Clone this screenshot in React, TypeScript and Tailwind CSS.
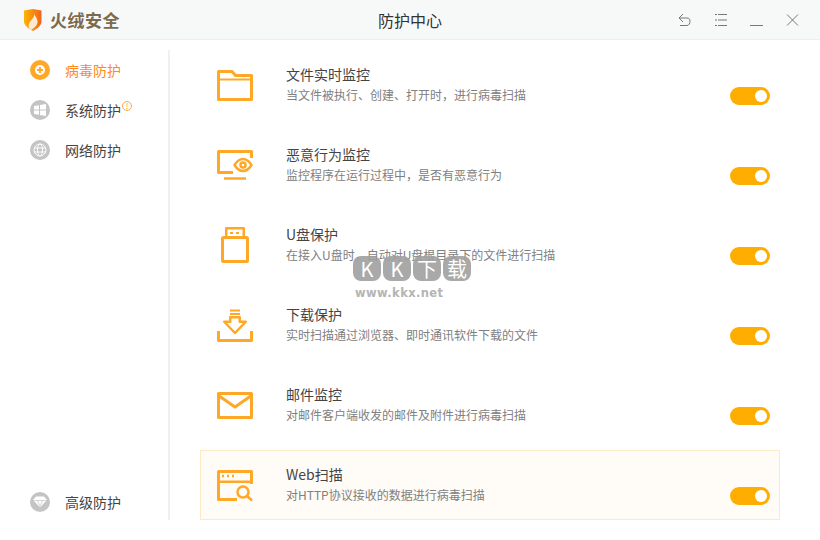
import type { ReactNode } from 'react';

const FONT = "font-['Noto_Sans_CJK_SC','Noto_Sans',sans-serif]";

const ORANGE = '#ffa726';

function Svg({ children }: { children: ReactNode }) {
  return (
    <svg width="38" height="38" viewBox="0 0 38 38" fill="none" stroke={ORANGE} strokeWidth="3" strokeLinejoin="round">
      {children}
    </svg>
  );
}

const FolderIcon = () => (
  <Svg>
    <path d="M1.500 5.500h13.500l3.500 4h16v24h-33z" />
    <path d="M1.500 13.500h33" strokeWidth="2" />
  </Svg>
);

const MonitorIcon = () => (
  <Svg>
    <path d="M16 26.500H1.500v-21h33V12" />
    <path d="M7 32.500h22" strokeWidth="2.500" />
    <path d="M17.500 19c2.500-4 5.500-6 8.500-6s6 2 8.500 6c-2.500 4-5.500 6-8.500 6s-6-2-8.500-6z" strokeWidth="2.500" />
    <circle cx="26" cy="19" r="2.500" strokeWidth="2.500" />
  </Svg>
);

const UsbIcon = () => (
  <Svg>
    <path d="M9.250 11V2.250h17.500V11" strokeWidth="2.500" />
    <rect x="5.500" y="11.500" width="25" height="24" rx="1" />
    <path d="M13 7h3M19 7h3" strokeWidth="2" />
  </Svg>
);

const DownloadIcon = () => (
  <Svg>
    <path d="M13 4.500h10M13 8h10" strokeWidth="2" />
    <path d="M13.250 11.250h9.500v4.500h6L18 27 7.250 15.750h6z" strokeWidth="2.500" />
    <path d="M1.500 25v9.500h33V25" />
  </Svg>
);

const MailIcon = () => (
  <Svg>
    <rect x="1.500" y="7.500" width="33" height="24" />
    <path d="M1.500 9.500L18 21 34.500 9.500" />
  </Svg>
);

const WebIcon = () => (
  <Svg>
    <path d="M20 33.500H1.500v-28h33V18" />
    <path d="M1.500 15.750h33" strokeWidth="2.500" />
    <path d="M5 10h2M10 10h2M15 10h2" strokeWidth="2.500" />
    <circle cx="26" cy="26" r="5.500" strokeWidth="2.500" />
    <path d="M30 30l5 4.500" strokeWidth="2.500" />
  </Svg>
);

const ROWS = [
  { icon: <FolderIcon />, title: '文件实时监控', desc: '当文件被执行、创建、打开时，进行病毒扫描' },
  { icon: <MonitorIcon />, title: '恶意行为监控', desc: '监控程序在运行过程中，是否有恶意行为' },
  { icon: <UsbIcon />, title: 'U盘保护', desc: '在接入U盘时，自动对U盘根目录下的文件进行扫描' },
  { icon: <DownloadIcon />, title: '下载保护', desc: '实时扫描通过浏览器、即时通讯软件下载的文件' },
  { icon: <MailIcon />, title: '邮件监控', desc: '对邮件客户端收发的邮件及附件进行病毒扫描' },
  { icon: <WebIcon />, title: 'Web扫描', desc: '对HTTP协议接收的数据进行病毒扫描', active: true },
];

function Logo() {
  return (
    <svg width="20" height="22" viewBox="0 0 20 22">
      <defs>
        <linearGradient id="shield" x1="0" y1="0" x2="1" y2="0">
          <stop offset="0" stopColor="#ffb400" />
          <stop offset="1" stopColor="#f0641e" />
        </linearGradient>
      </defs>
      <path d="M10 0l8.500 1.500v11c0 4-4 7-8.500 9.500C5.500 19.500 1 16.500 1 12.500v-11z" fill="url(#shield)" />
      <path d="M11.500 5c1 3.500 3.500 5 3 8.500-.5 3.500-3.500 5.500-6.500 7.500-2.500-1.500-3-5-1.500-7.500 1.500-2.500 4.500-4.500 5-8.500z" fill="#ffe9cf" />
    </svg>
  );
}

function NavBadge({ on, children }: { on?: boolean; children: ReactNode }) {
  return (
    <span className={`w-5 h-5 rounded-full flex items-center justify-center shrink-0 ${on ? 'bg-[#ffa726]' : 'bg-[#c4c4c4]'}`}>
      {children}
    </span>
  );
}

function NavItem({ label, on, badge, children }: { label: string; on?: boolean; badge?: boolean; children: ReactNode }) {
  return (
    <div className="h-10 flex items-center pl-[30px] gap-[15px]">
      <NavBadge on={on}>{children}</NavBadge>
      <span className={`relative text-sm ${on ? 'text-[#ff8a1e]' : 'text-[#444]'}`}>
        {label}
        {badge && (
          <span className="absolute -right-[11px] top-[1px] w-[10px] h-[10px] rounded-full border border-[#ffa64d] text-[#ff9a3c] text-[8px] leading-[8px] text-center">
            !
          </span>
        )}
      </span>
    </div>
  );
}

function Toggle() {
  return (
    <div className="w-10 h-[18px] rounded-full bg-[#ffae00] flex items-center justify-end pr-[3px]">
      <span className="w-3 h-3 rounded-full bg-white" />
    </div>
  );
}

function Row({ icon, title, desc, active }: { icon: ReactNode; title: string; desc: string; active?: boolean }) {
  return (
    <div className={`h-[70px] flex border pl-4 pr-[9px] ${active ? 'bg-[#fffbf6] border-[#ffe8c6]' : 'border-transparent'}`}>
      <div className="w-[69px] flex items-center shrink-0">{icon}</div>
      <div className="flex-1 pt-[13px]">
        <p className="text-sm leading-5 text-[#444]">{title}</p>
        <p className="mt-[1px] text-xs leading-5 text-[#808080]">{desc}</p>
      </div>
      <div className="pt-[36px]">
        <Toggle />
      </div>
    </div>
  );
}

function Watermark() {
  return (
    <div className="absolute left-[353px] top-[256px] w-[118px] pointer-events-none">
      <div className="flex gap-[2px] h-[25px]">
        {['K', 'K', '下', '载'].map((c, i) => (
          <span key={i} className="flex-1 bg-[#a0a0a0]/90 rounded-[8px] text-white text-xl leading-[25px] text-center">
            {c}
          </span>
        ))}
      </div>
      <p className="mt-[4px] pl-[2px] font-['DejaVu_Sans',sans-serif] font-bold text-[11.500px] leading-4 tracking-[0.4px] text-[#b4b4b4]">www.kkx.net</p>
    </div>
  );
}

export default function App() {
  return (
    <div className={`relative w-[820px] h-[540px] bg-white overflow-hidden ${FONT}`}>
      <header className="h-10 bg-[#f7f9f9] border-b border-[#eeeeee] flex items-center pl-[23px] pr-[21px]">
        <div className="flex items-center gap-[7px] w-[323px]">
          <Logo />
          <span className="text-[17px] font-bold tracking-[0.5px] text-[#7b6a4f]">火绒安全</span>
        </div>
        <h1 className="w-[128px] text-center text-base text-[#333]">防护中心</h1>
        <div className="ml-auto flex items-center gap-[23px] text-[#777]">
          <svg width="13" height="14" viewBox="0 0 13 14" fill="none" stroke="currentColor">
            <path d="M5 1L1 5l4 4M1 5h8c2 0 3 1 3 3.200S11 12.500 9 12.500H2" />
          </svg>
          <svg width="13" height="14" viewBox="0 0 13 14" fill="none" stroke="currentColor">
            <path d="M1 1.500h2M4 1.500h9M1 7h2M4 7h9M1 12.500h2M4 12.500h9" />
          </svg>
          <svg width="13" height="14" viewBox="0 0 13 14" fill="none" stroke="currentColor">
            <path d="M0 12.500h13" />
          </svg>
          <svg width="13" height="14" viewBox="0 0 13 14" fill="none" stroke="currentColor">
            <path d="M1 1.500l11 11M12 1.500l-11 11" />
          </svg>
        </div>
      </header>
      <div className="flex pt-[10px]">
        <aside className="w-[170px] h-[470px] border-r-2 border-[#f0f0f0] flex flex-col justify-between shrink-0">
          <nav>
            <NavItem label="病毒防护" on>
              <svg width="10" height="10" viewBox="0 0 10 10" fill="#fff">
                <circle cx="5" cy="5" r="5" />
                <path d="M4 2h2v2h2v2H6v2H4V6H2V4h2z" fill="#ffa726" />
              </svg>
            </NavItem>
            <NavItem label="系统防护" badge>
              <svg width="12" height="12" viewBox="0 0 12 12" fill="#fff">
                <path d="M0 2l5-.8v4.300H0zM6 1l6-1v5.500H6zM0 6.500h5v4.300L0 10zM6 6.500h6V12l-6-1z" />
              </svg>
            </NavItem>
            <NavItem label="网络防护">
              <svg width="14" height="14" viewBox="0 0 14 14" fill="none" stroke="#fff">
                <circle cx="7" cy="7" r="6" />
                <ellipse cx="7" cy="7" rx="2.500" ry="6" />
                <path d="M1 5h12M1 9h12" />
              </svg>
            </NavItem>
          </nav>
          <div className="-mb-[2px]">
            <NavItem label="高级防护">
              <svg width="14" height="12" viewBox="0 0 14 12" fill="#fff">
                <path d="M3 .5h8l3 3.500-7 7.500L0 4z" />
                <path d="M0 4.500h14M4.500 4.500L7 10.500l2.500-6" fill="none" stroke="#c4c4c4" strokeWidth="0.700" />
              </svg>
            </NavItem>
          </div>
        </aside>
        <main className="ml-[30px] w-[580px] flex flex-col gap-[10px]">
          {ROWS.map((r) => (
            <Row key={r.title} {...r} />
          ))}
        </main>
      </div>
      <Watermark />
    </div>
  );
}
